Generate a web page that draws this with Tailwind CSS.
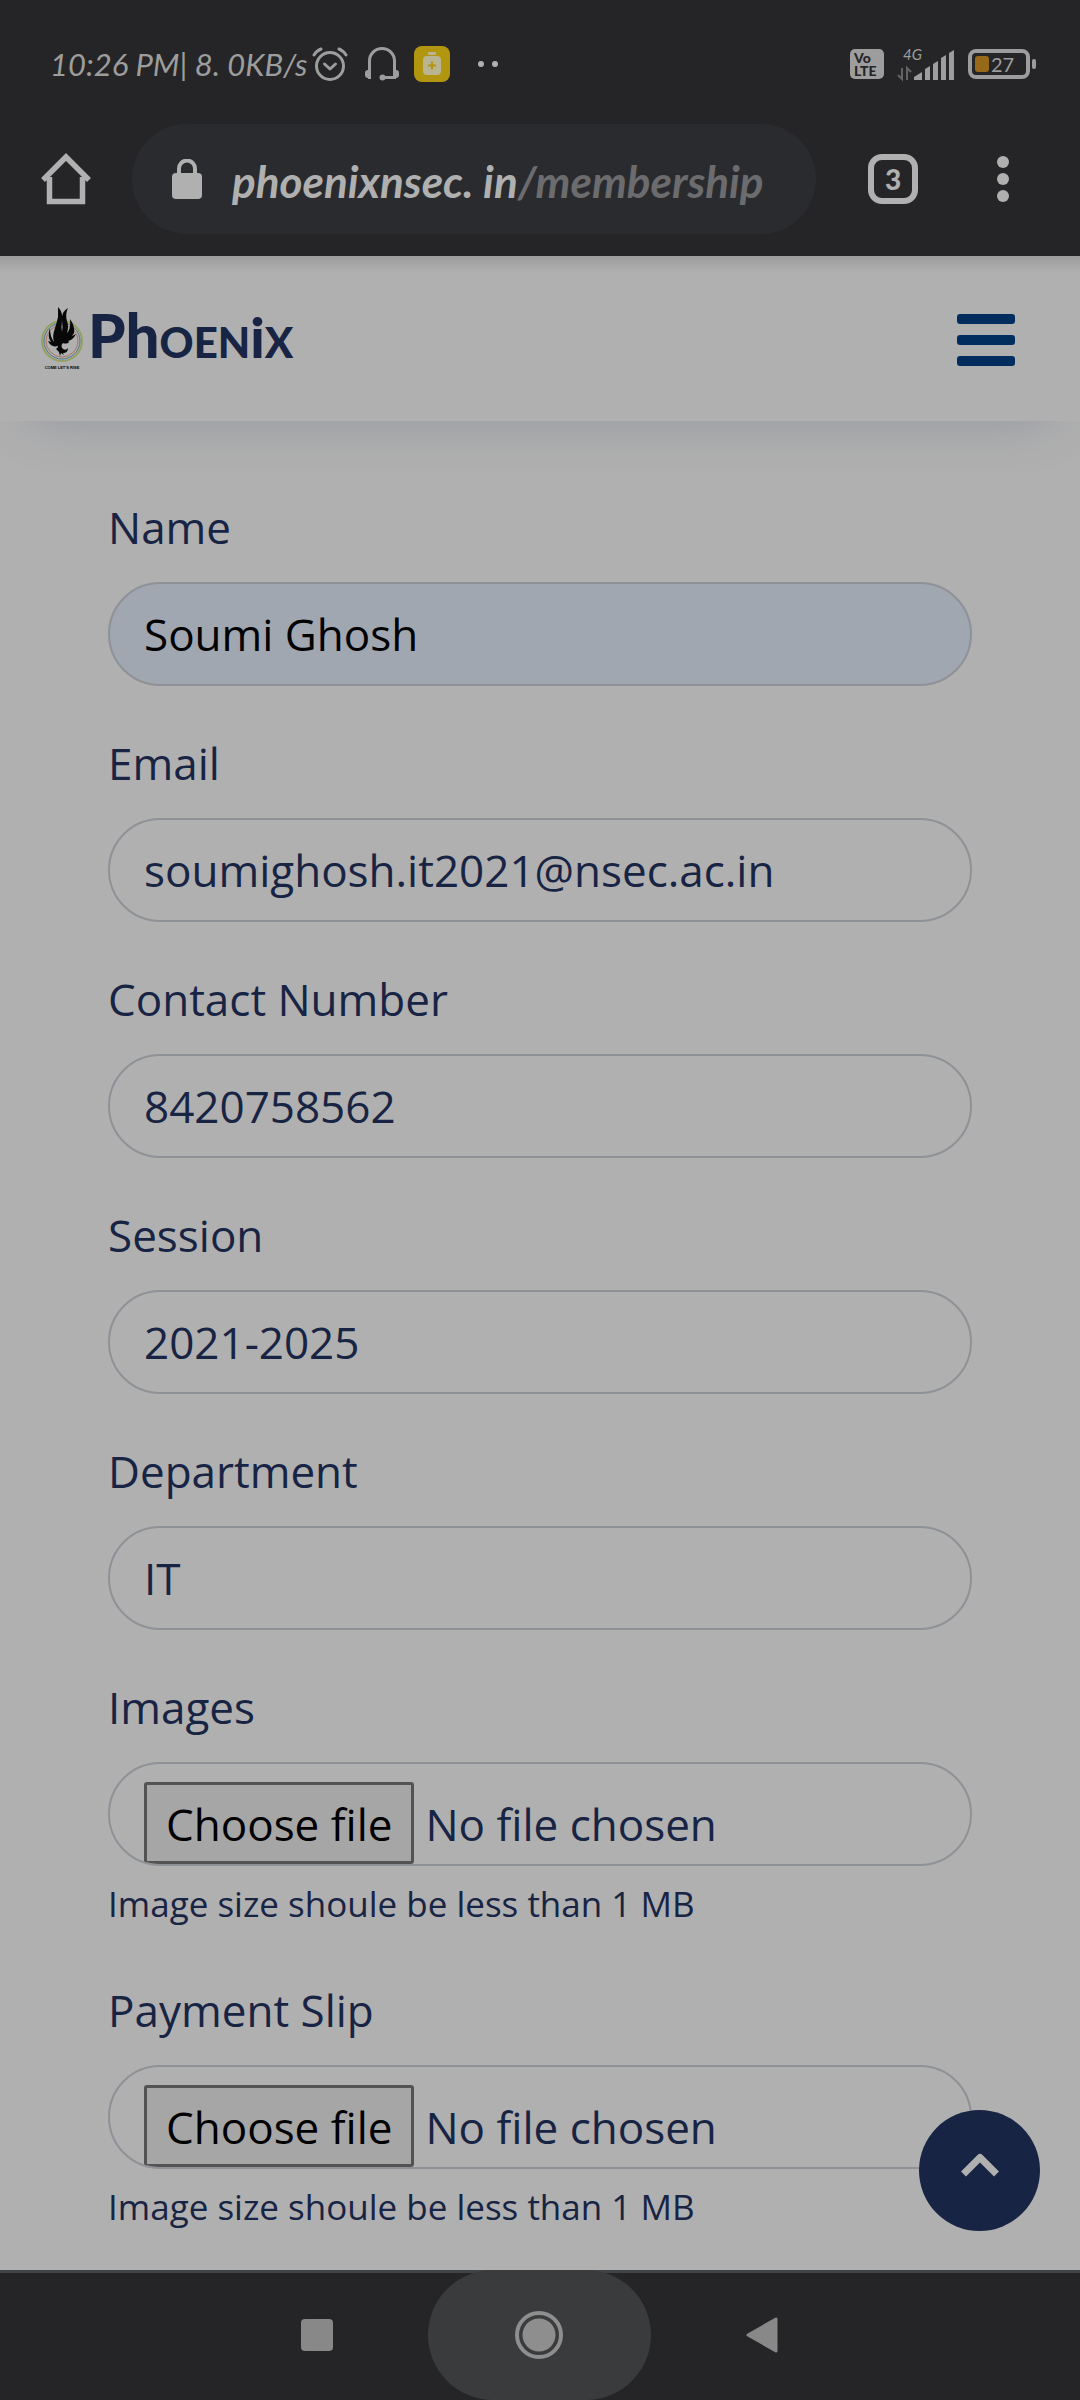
<!DOCTYPE html>
<html lang="en">
<head>
<meta charset="utf-8">
<meta name="viewport" content="width=device-width, initial-scale=1">
<title>Phoenix membership</title>
<script src="https://cdn.jsdelivr.net/npm/@tailwindcss/browser@4"></script>
</head>
<body class="flex min-h-screen flex-col bg-[#b0b0b0] font-['Open_Sans',sans-serif] text-[44px] leading-[66px] text-[#182444]">

<div class="bg-[#252527] font-['Lato',sans-serif]">
  <!-- Status bar -->
  <div class="flex h-[124px] items-center justify-between pt-1 pr-11 pl-[50px] text-[#9d9d9d]">
    <div class="flex items-center">
      <span class="w-[262px] text-[31px] leading-9 whitespace-nowrap italic">10:26 PM| 8. 0KB/s</span>
      <svg class="h-9 w-9" viewBox="0 0 36 36" fill="none" stroke="currentColor" stroke-width="3" stroke-linecap="round" stroke-linejoin="round" aria-label="Alarm"><circle cx="18" cy="20" r="13.500"/><path d="M12.500 18l5.500 5 5.500-5"/><path d="M2 9q3-4.500 7-6M34 9q-3-4.500-7-6"/></svg>
      <svg class="ml-4 h-9 w-9" viewBox="0 0 36 36" fill="none" stroke="currentColor" stroke-width="3" aria-label="Headphones"><path d="M5.500 33V15a12.500 12.500 0 0 1 25 0v18M18 31.500h12"/><path d="M6 24H4q-3 0-3 3v2q0 3 3 3h2zM30 24h2q3 0 3 3v2q0 3-3 3h-2z" fill="currentColor" stroke="none"/><circle cx="18.500" cy="31.500" r="3" fill="currentColor" stroke="none"/></svg>
      <svg class="ml-3.5 h-9 w-9" viewBox="0 0 36 36" aria-label="Battery saver"><rect width="36" height="36" rx="8" fill="#b3960f"/><rect x="14" y="6" width="8" height="3" rx="1" fill="#b9b592"/><rect x="9" y="10" width="18" height="19" rx="4" fill="#b9b592"/><path d="M18 15.500v8M14 19.500h8" stroke="#b3960f" stroke-width="2"/></svg>
      <span class="ml-7 flex gap-2"><i class="size-1.5 rounded-full bg-[#b0b0b0]"></i><i class="size-1.5 rounded-full bg-[#b0b0b0]"></i></span>
    </div>
    <div class="flex items-center">
      <span class="flex h-[30px] w-[34px] flex-col items-start justify-center rounded-[5px] bg-[#9d9d9d] pl-1 font-['Lato',sans-serif] text-[14px] leading-[13px] font-black text-[#252527]"><span>Vo</span><span>LTE</span></span>
      <svg class="ml-3 h-9 w-[60px]" viewBox="0 0 60 36" fill="currentColor" aria-label="4G signal"><text x="7" y="14" font-size="15" font-family="Lato, sans-serif" font-style="italic">4G</text><path d="M18 34v-3l8-5v8zM29 34V23l5-3v14zM37 34V18l5-3v19zM45 34V12l5-3v25zM53 34V7l5-3v30z"/><path d="M6 22v11l-4-4M11 34V22l4 4" fill="none" stroke="#636364" stroke-width="2"/></svg>
      <div class="ml-3 flex h-[30px] w-[62px] items-center rounded-lg border-4 border-[#9d9d9d] pl-[3px]"><i class="h-4 w-[14px] rounded-[3px] bg-[#99691a]"></i><span class="ml-0.5 text-[20px] leading-5">27</span></div>
      <i class="ml-0.5 h-2.5 w-1 rounded-sm bg-[#9d9d9d]"></i>
    </div>
  </div>
  <!-- Browser toolbar -->
  <div class="flex items-start pr-[69px] pb-[22px] pl-10 text-[#b0b0b0]">
    <button class="mt-[29px] mr-10" aria-label="Home"><svg class="h-[52px] w-[52px]" viewBox="0 0 52 52" fill="none" stroke="currentColor" stroke-width="5.500" stroke-linejoin="round"><path d="M9.500 24v24.500h33V24M3 27L26 4l23 23" stroke-linejoin="miter"/></svg></button>
    <div class="flex h-[110px] min-w-0 flex-1 items-center rounded-full bg-[#2a2b2f] pl-10">
      <svg class="h-10 w-[30px] shrink-0" viewBox="0 0 30 40" fill="none" aria-label="Secure"><rect y="14" width="30" height="26" rx="4" fill="currentColor"/><path d="M7 15V9.500a8 8 0 0 1 16 0V15" stroke="currentColor" stroke-width="4"/></svg>
      <a href="#" class="ml-[30px] pt-1 text-[44px] leading-[52px] font-bold whitespace-nowrap italic">phoenixnsec. in<span class="text-[#6c6c6e]">/membership</span></a>
    </div>
    <button class="mt-[30px] ml-[52px] size-[50px] rounded-[14px] border-[6px] text-[28px] leading-8 font-black" aria-label="Tabs: 3">3</button>
    <button class="mt-8 ml-[77px] flex flex-col gap-[5px] px-0.5" aria-label="More options"><i class="size-3 rounded-full bg-current"></i><i class="size-3 rounded-full bg-current"></i><i class="size-3 rounded-full bg-current"></i></button>
  </div>
</div>

<header class="relative flex h-[165px] items-center justify-between bg-linear-to-b from-[#9c9c9c] via-[#b0b0b0] via-10% to-[#b0b0b0] pr-[65px] pl-10 shadow-[0_30px_50px_-30px_rgba(70,85,115,0.28)]">
  <a href="#" class="flex items-center gap-1" aria-label="Phoenix">
    <svg class="h-16 w-11" viewBox="0 0 44 64">
      <g fill="none"><circle cx="22" cy="34" r="20" stroke="#94a05f" stroke-width="2"/><circle cx="22" cy="34" r="18" stroke="#4c7587" stroke-width="1"/><circle cx="22" cy="34" r="16" stroke="#ae705f" stroke-width="1"/></g>
      <path fill="#080808" d="M18 0q5 5 4 13-1 7 0 12 1-5 0-12-1-8 6-12-3 6-1 13 2 6 0 12 4-4 3-14 5 7 4 14l-2 3 4-2q-3 6-8 7 2 1 0 2-3 1-5 0-3 3 0 6 3 2 5-1 0 5-5 5l1 2-3-2-1 3-1-4-3-3q2-1 2-3-7 2-10-5l3 1q-4-5-1-14 0 9 4 14-2-6 1-14 2-6 3-11z"/>
      <text x="22" y="62" font-size="4" font-weight="900" text-anchor="middle" font-family="Liberation Sans, sans-serif">COME LET'S RISE</text>
    </svg>
    <span class="font-['Lato',sans-serif] text-[42px] leading-[60px] font-black"><span class="text-[60px]">P</span><span class="text-[60px]">h</span>OEN<span class="text-[56px]">i</span>X</span>
  </a>
  <button class="flex flex-col gap-[11px] pt-0.5" aria-label="Menu"><i class="h-2.5 w-[58px] rounded-[3px] bg-[#002d5d]"></i><i class="h-2.5 w-[58px] rounded-[3px] bg-[#002d5d]"></i><i class="h-2.5 w-[58px] rounded-[3px] bg-[#002d5d]"></i></button>
</header>

<main class="relative flex-1">
  <form class="flex flex-col gap-11 px-[108px] pt-[73px] pb-8">
    <div class="flex flex-col gap-[22px]">
      <label for="name">Name</label>
      <input id="name" type="text" value="Soumi Ghosh" class="h-[104px] w-full rounded-full border-2 border-[#8e9196] bg-[#a0a7b1] px-[34px] text-black">
    </div>
    <div class="flex flex-col gap-[22px]">
      <label for="email">Email</label>
      <input id="email" type="email" value="soumighosh.it2021@nsec.ac.in" class="h-[104px] w-full rounded-full border-2 border-[#8e9196] px-[34px]">
    </div>
    <div class="flex flex-col gap-[22px]">
      <label for="contact">Contact Number</label>
      <input id="contact" type="tel" value="8420758562" class="h-[104px] w-full rounded-full border-2 border-[#8e9196] px-[34px]">
    </div>
    <div class="flex flex-col gap-[22px]">
      <label for="session">Session</label>
      <input id="session" type="text" value="2021-2025" class="h-[104px] w-full rounded-full border-2 border-[#8e9196] px-[34px]">
    </div>
    <div class="flex flex-col gap-[22px]">
      <label for="department">Department</label>
      <input id="department" type="text" value="IT" class="h-[104px] w-full rounded-full border-2 border-[#8e9196] px-[34px]">
    </div>
    <div>
      <label for="images" class="block">Images</label>
      <div class="relative mt-[22px] flex h-[104px] items-start overflow-hidden rounded-full border-2 border-[#8e9196] px-[34px] pt-[18px]">
        <span class="h-[82px] rounded-[3px] border-[3px] border-[#535353] bg-[#a6a6a6] px-[19px] pt-1.5 whitespace-nowrap text-black">Choose file</span>
        <span class="ml-[11px] pt-[9px] whitespace-nowrap">No file chosen</span>
        <input id="images" type="file" class="absolute inset-0 opacity-0">
      </div>
      <p class="mt-2 text-[35px] leading-[59px]">Image size shoule be less than 1 MB</p>
    </div>
    <div>
      <label for="slip" class="block">Payment Slip</label>
      <div class="relative mt-[22px] flex h-[104px] items-start overflow-hidden rounded-full border-2 border-[#8e9196] px-[34px] pt-[18px]">
        <span class="h-[82px] rounded-[3px] border-[3px] border-[#535353] bg-[#a6a6a6] px-[19px] pt-1.5 whitespace-nowrap text-black">Choose file</span>
        <span class="ml-[11px] pt-[9px] whitespace-nowrap">No file chosen</span>
        <input id="slip" type="file" class="absolute inset-0 opacity-0">
      </div>
      <p class="mt-2 text-[35px] leading-[59px]">Image size shoule be less than 1 MB</p>
    </div>
  </form>
  <button class="absolute right-10 bottom-[39px] flex size-[121px] justify-center rounded-full bg-[#182444] pt-[42px] text-[#b0b0b0]" aria-label="Back to top"><svg class="h-[26px] w-10" viewBox="0 0 40 26" fill="none" stroke="currentColor" stroke-width="7"><path d="M3.500 22L20 5.500 36.500 22" stroke-linejoin="round"/></svg></button>
</main>

<!-- System navigation -->
<nav class="relative flex h-[130px] items-center justify-center bg-[#252527] pr-0.5 text-[#888]">
  <div class="absolute inset-x-0 top-0 h-[3px] bg-[#414447]"></div>
  <button class="mr-[95px] size-8 rounded-sm bg-current" aria-label="Recent apps"></button>
  <button class="relative flex h-[130px] w-[223px] items-center justify-center rounded-full bg-[#3a3b3c] text-[#8e8e8e]" aria-label="Home screen"><svg class="size-12" viewBox="0 0 48 48"><circle cx="24" cy="24" r="22" fill="none" stroke="currentColor" stroke-width="4"/><circle cx="24" cy="24" r="16.500" fill="currentColor"/></svg></button>
  <button class="ml-[95px]" aria-label="Back"><svg class="h-9 w-8" viewBox="0 0 32 36"><path d="M2 18L30 2v32z" fill="currentColor" stroke="currentColor" stroke-width="3" stroke-linejoin="round"/></svg></button>
</nav>
</body>
</html>
